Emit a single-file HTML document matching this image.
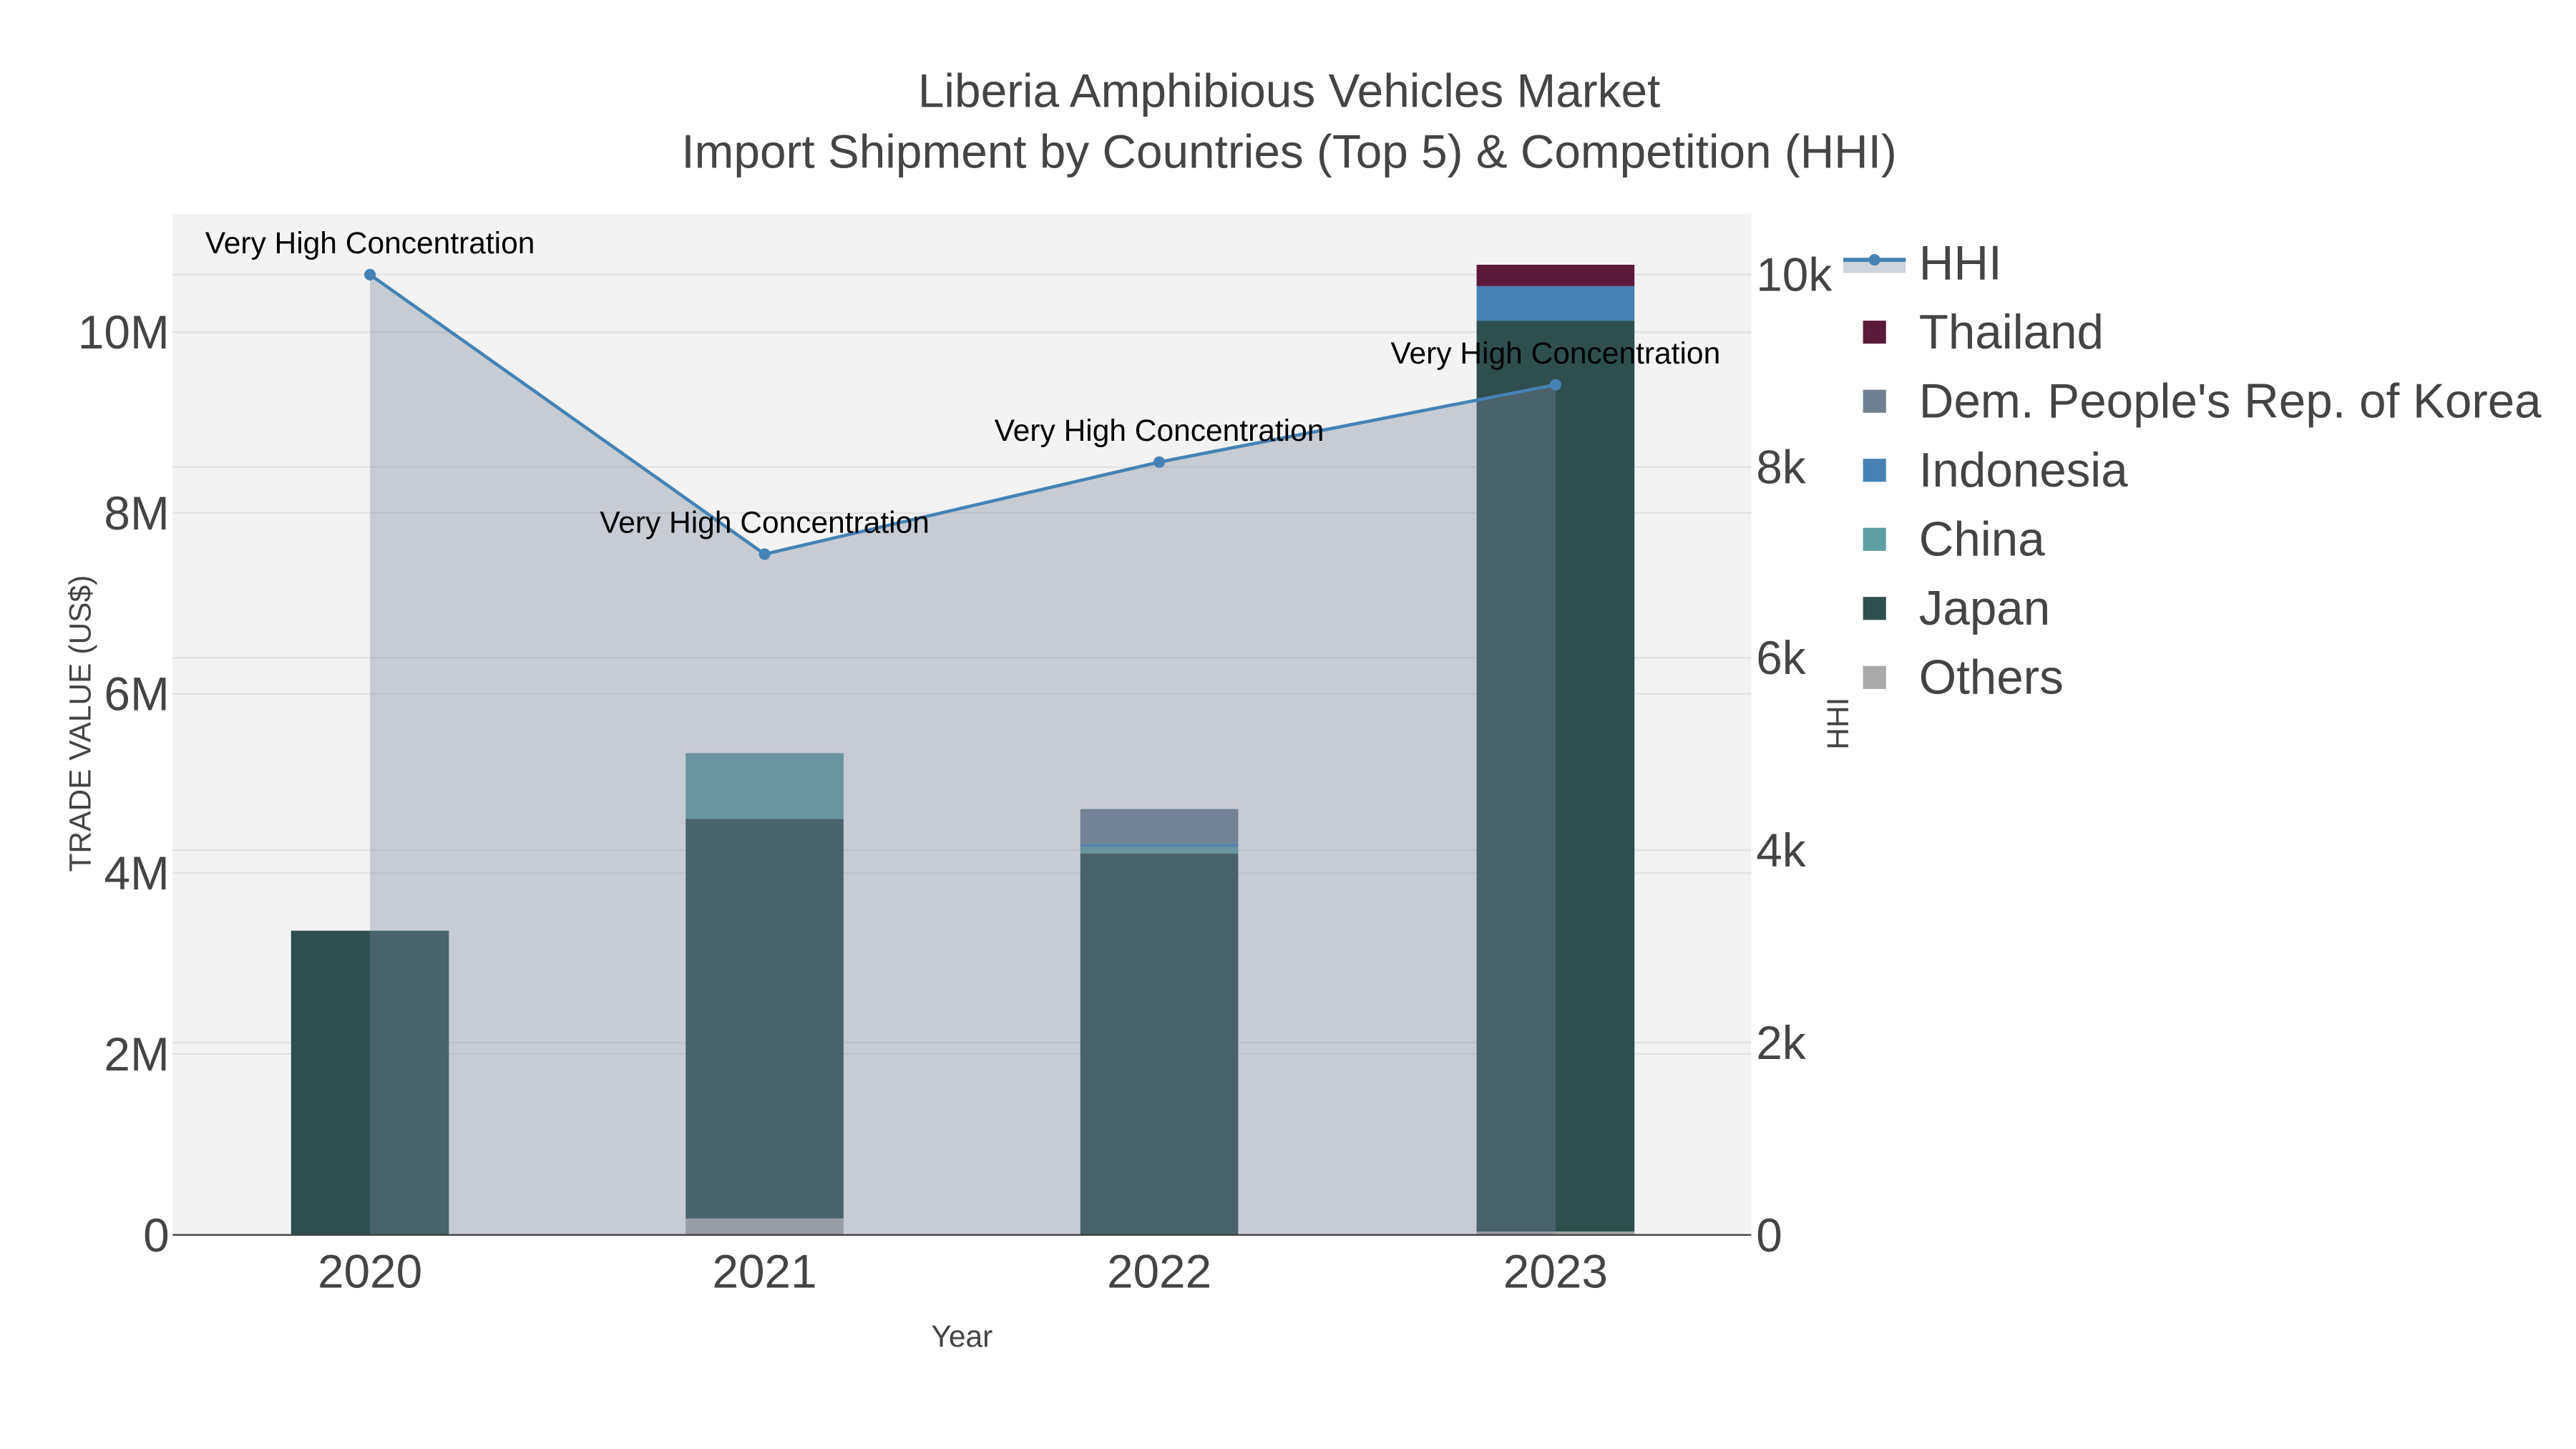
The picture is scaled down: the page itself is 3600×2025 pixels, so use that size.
<!DOCTYPE html>
<html><head><meta charset="utf-8"><style>
html,body{margin:0;padding:0;background:#fff;}
svg{display:block;font-family:"Liberation Sans",Arial,sans-serif;}
</style></head><body>
<svg width="3600" height="2025" viewBox="0 0 1566.6 881.2" xmlns="http://www.w3.org/2000/svg">
<rect width="1566.6" height="881.2" fill="#fff"/>
<rect x="105" y="130" width="960" height="621" fill="#f3f3f3"/>
<g stroke="#e2e2e2" stroke-width="1">
<line x1="105" x2="1065" y1="641" y2="641"/><line x1="105" x2="1065" y1="531" y2="531"/>
<line x1="105" x2="1065" y1="422" y2="422"/><line x1="105" x2="1065" y1="312" y2="312"/>
<line x1="105" x2="1065" y1="202" y2="202"/>
<line x1="105" x2="1065" y1="634" y2="634"/><line x1="105" x2="1065" y1="517" y2="517"/>
<line x1="105" x2="1065" y1="400" y2="400"/><line x1="105" x2="1065" y1="284" y2="284"/>
<line x1="105" x2="1065" y1="167" y2="167"/>
</g>
<rect x="177" y="566" width="96" height="185" fill="#2f4f4f"/>
<rect x="417" y="741" width="96" height="10" fill="#a9a9a9"/>
<rect x="417" y="498" width="96" height="243" fill="#2f4f4f"/>
<rect x="417" y="458" width="96" height="40" fill="#5f9ea0"/>
<rect x="657" y="519" width="96" height="232" fill="#2f4f4f"/>
<rect x="657" y="515" width="96" height="4" fill="#5f9ea0"/>
<rect x="657" y="513" width="96" height="2" fill="#4682b4"/>
<rect x="657" y="492" width="96" height="21" fill="#708090"/>
<rect x="898" y="749" width="96" height="2" fill="#a9a9a9"/>
<rect x="898" y="195" width="96" height="554" fill="#2f4f4f"/>
<rect x="898" y="174" width="96" height="21" fill="#4682b4"/>
<rect x="898" y="161" width="96" height="13" fill="#5c1a3a"/>
<polygon points="225,167 465,337 705,281 946,234 946,751 225,751" fill="rgb(122,134,156)" fill-opacity="0.36"/>
<line x1="105" x2="1065" y1="751" y2="751" stroke="#444" stroke-width="1"/>
<polyline points="225,167 465,337 705,281 946,234" fill="none" stroke="#4682b4" stroke-width="2"/>
<g fill="#4682b4"><circle cx="225" cy="167" r="3.5"/><circle cx="465" cy="337" r="3.5"/><circle cx="705" cy="281" r="3.5"/><circle cx="946" cy="234" r="3.5"/></g>
<g font-size="18.5" fill="#000" text-anchor="middle">
<text x="225" y="154">Very High Concentration</text>
<text x="465" y="324">Very High Concentration</text>
<text x="705" y="268">Very High Concentration</text>
<text x="946" y="221">Very High Concentration</text>
</g>
<g fill="#444" text-anchor="middle" font-size="28.6">
<text x="784" y="65">Liberia Amphibious Vehicles Market</text>
<text x="784" y="102">Import Shipment by Countries (Top 5) &amp; Competition (HHI)</text>
</g>
<g fill="#444" font-size="28.6" text-anchor="end">
<text x="103" y="761">0</text><text x="103" y="651">2M</text><text x="103" y="541">4M</text>
<text x="103" y="432">6M</text><text x="103" y="322">8M</text><text x="103" y="212">10M</text>
</g>
<g fill="#444" font-size="28.6" text-anchor="start">
<text x="1068" y="761">0</text><text x="1068" y="644">2k</text><text x="1068" y="527">4k</text>
<text x="1068" y="410">6k</text><text x="1068" y="294">8k</text><text x="1068" y="177">10k</text>
</g>
<g fill="#444" font-size="28.6" text-anchor="middle">
<text x="225" y="783">2020</text><text x="465" y="783">2021</text><text x="705" y="783">2022</text><text x="946" y="783">2023</text>
</g>
<text x="585" y="819" fill="#444" font-size="18.5" text-anchor="middle">Year</text>
<text transform="translate(55,440) rotate(-90)" fill="#444" font-size="18.5" text-anchor="middle">TRADE VALUE (US$)</text>
<text transform="translate(1124,440) rotate(-90)" fill="#444" font-size="18.5" text-anchor="middle">HHI</text>
<rect x="1121" y="158" width="38" height="8" fill="rgb(122,134,156)" fill-opacity="0.36"/>
<line x1="1121" x2="1159" y1="158" y2="158" stroke="#4682b4" stroke-width="2.5"/>
<circle cx="1140" cy="158" r="3.5" fill="#4682b4"/>
<rect x="1133" y="195" width="14" height="14" fill="#5c1a3a"/>
<rect x="1133" y="237" width="14" height="14" fill="#708090"/>
<rect x="1133" y="279" width="14" height="14" fill="#4682b4"/>
<rect x="1133" y="321" width="14" height="14" fill="#5f9ea0"/>
<rect x="1133" y="363" width="14" height="14" fill="#2f4f4f"/>
<rect x="1133" y="405" width="14" height="14" fill="#a9a9a9"/>
<g fill="#444" font-size="29.3">
<text x="1167" y="170">HHI</text>
<text x="1167" y="212">Thailand</text>
<text x="1167" y="254">Dem. People's Rep. of Korea</text>
<text x="1167" y="296">Indonesia</text>
<text x="1167" y="338">China</text>
<text x="1167" y="380">Japan</text>
<text x="1167" y="422">Others</text>
</g>
</svg>
</body></html>
